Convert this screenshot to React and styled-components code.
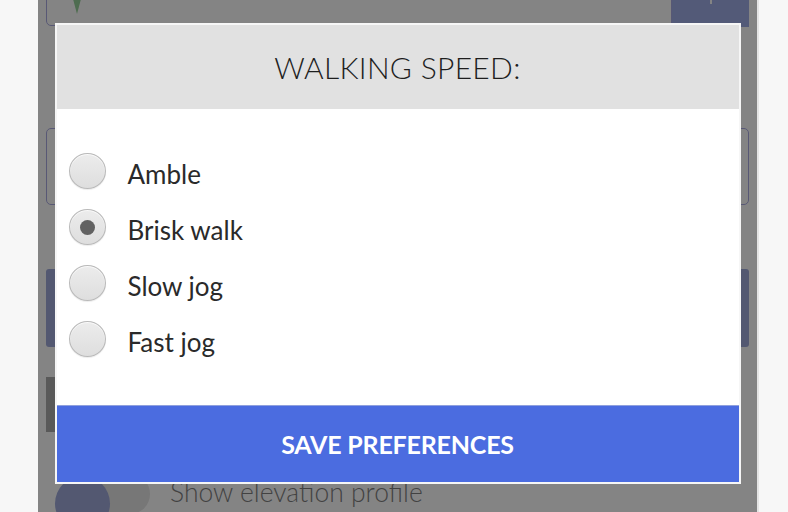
import React, { useState } from 'react';
import styled, { createGlobalStyle } from 'styled-components';

const GlobalStyle = createGlobalStyle`
    html, body {
        margin: 0;
        padding: 0;
        background: #f7f7f7;
        font-family: 'Lato', 'Noto Sans', sans-serif;
        overflow: hidden;
    }
`;

const Page = styled.div`
    height: 100vh;
    display: flex;
    padding-left: 38px;
`;

const AppColumn = styled.div`
    position: relative;
    width: 719px;
    height: 100vh;
    overflow: hidden;
    background: #ffffff;
    border-right: 2px solid #e4e4e4;
`;

const Content = styled.div`
    display: flex;
    flex-direction: column;
    padding: 0 8px;
    margin-top: -35px;
`;

const SearchRow = styled.div`
    display: flex;
    align-items: flex-start;
    height: 62px;
`;

const SearchInput = styled.div`
    flex: 1;
    height: 59px;
    border: 1px solid #6d6dcc;
    border-radius: 5px 0 0 5px;
    display: flex;
    align-items: flex-end;
    justify-content: space-between;
    padding: 0 30px 0 22px;
`;

const Pin = styled.svg`
    width: 16px;
    height: 30px;
    margin-bottom: 11px;
`;

const ClearDot = styled.div`
    width: 26px;
    height: 26px;
    border-radius: 50%;
    background: #a8a8a8;
    margin-bottom: 29px;
`;

const GoButton = styled.div`
    width: 77px;
    height: 62px;
    background: #5a73d8;
    display: flex;
    justify-content: center;
    align-items: flex-end;
    padding-bottom: 23px;
    box-sizing: border-box;
`;

const Tick = styled.div`
    width: 2px;
    height: 5px;
    background: #ffffff;
`;

const TextBox = styled.div`
    height: 75px;
    margin-top: 101px;
    border: 1px solid #6d6dcc;
    border-radius: 5px;
`;

const PrimaryBlock = styled.div`
    height: 78px;
    margin-top: 64px;
    background: #5a6cc0;
    border-radius: 3px;
`;

const GreyChip = styled.div`
    width: 90px;
    height: 55px;
    margin-top: 30px;
    background: #6e6e6e;
`;

const ToggleRow = styled.div`
    display: flex;
    align-items: flex-start;
    gap: 20px;
    margin-top: 42px;
`;

const Track = styled.div`
    position: relative;
    width: 88px;
    height: 40px;
    margin-left: 16px;
    border-radius: 20px;
    background: #d2d2d2;
`;

const Knob = styled.div`
    position: absolute;
    left: -7px;
    top: 2px;
    width: 55px;
    height: 55px;
    border-radius: 50%;
    background: #5a6cc0;
`;

const ToggleLabel = styled.span`
    font-size: 26.5px;
    font-weight: 300;
    color: #222;
    line-height: 36px;
`;

const Overlay = styled.div`
    position: absolute;
    inset: 0;
    background: rgba(80, 80, 80, 0.7);
    display: flex;
    justify-content: center;
    align-items: flex-start;
    padding-top: 23px;
`;

const Modal = styled.div`
    width: 686px;
    height: 461px;
    box-sizing: border-box;
    background: #ffffff;
    border: 2px solid #f6f6f6;
    display: flex;
    flex-direction: column;
`;

const Header = styled.div`
    height: 84px;
    flex-shrink: 0;
    background: #e1e1e1;
    display: flex;
    align-items: center;
    justify-content: center;
`;

const Title = styled.h2`
    margin: 0;
    font-size: 30px;
    font-weight: 300;
    color: #1e1e1e;
    letter-spacing: 0.3px;
`;

const Options = styled.div`
    flex: 1;
    display: flex;
    flex-direction: column;
    padding: 34px 12px 0;
`;

const Option = styled.label`
    height: 56px;
    display: flex;
    align-items: center;
    gap: 22px;
    cursor: pointer;
`;

const Radio = styled.input`
    appearance: none;
    margin: 0;
    width: 37px;
    height: 36px;
    border-radius: 50%;
    border: 1.5px solid #b9b9b9;
    background: linear-gradient(#ececec, #dedede);
    box-shadow: inset 0 1px 1px rgba(255, 255, 255, 0.8), 0 1px 1px rgba(0, 0, 0, 0.08);
    display: grid;
    place-items: center;
    cursor: pointer;

    &:checked::after {
        content: '';
        width: 15px;
        height: 15px;
        border-radius: 50%;
        background: #626262;
    }
`;

const OptionText = styled.span`
    font-size: 26px;
    font-weight: 400;
    color: #2a2a2a;
    margin-top: 6px;
`;

const SaveButton = styled.button`
    height: 77px;
    flex-shrink: 0;
    border: none;
    border-top: 1px solid #8fa0dd;
    background: #4b6ce0;
    color: #ffffff;
    font-family: 'Lato', 'Noto Sans', sans-serif;
    font-size: 25px;
    font-weight: 700;
    letter-spacing: -0.2px;
    cursor: pointer;
`;

const speeds = ['Amble', 'Brisk walk', 'Slow jog', 'Fast jog'];

const App = () => {
    const [speed, setSpeed] = useState('Brisk walk');

    return (
        <>
            <GlobalStyle />
            <Page>
                <AppColumn>
                    <Content>
                        <SearchRow>
                            <SearchInput>
                                <Pin viewBox="0 0 16 30">
                                    <path d="M0 0 H16 L8 30 Z" fill="#4cb050" />
                                </Pin>
                                <ClearDot />
                            </SearchInput>
                            <GoButton>
                                <Tick />
                            </GoButton>
                        </SearchRow>
                        <TextBox />
                        <PrimaryBlock />
                        <GreyChip />
                        <ToggleRow>
                            <Track>
                                <Knob />
                            </Track>
                            <ToggleLabel>Show elevation profile</ToggleLabel>
                        </ToggleRow>
                    </Content>

                    <Overlay>
                        <Modal>
                            <Header>
                                <Title>WALKING SPEED:</Title>
                            </Header>
                            <Options>
                                {speeds.map((s) => (
                                    <Option key={s}>
                                        <Radio
                                            type="radio"
                                            name="speed"
                                            checked={speed === s}
                                            onChange={() => setSpeed(s)}
                                        />
                                        <OptionText>{s}</OptionText>
                                    </Option>
                                ))}
                            </Options>
                            <SaveButton>SAVE PREFERENCES</SaveButton>
                        </Modal>
                    </Overlay>
                </AppColumn>
            </Page>
        </>
    );
};

export default App;
